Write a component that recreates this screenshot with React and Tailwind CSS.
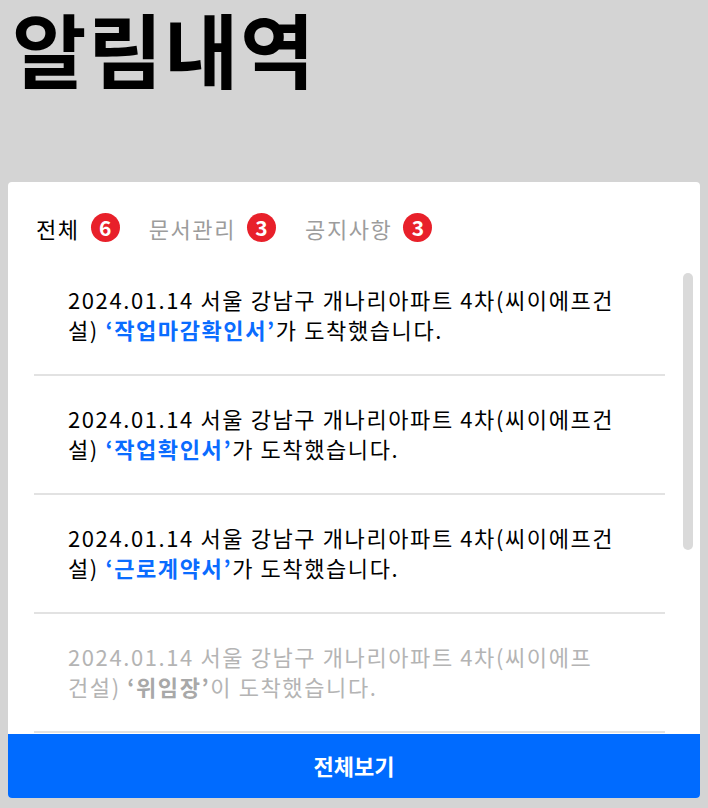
const font = { fontFamily: '"Noto Sans CJK KR", "Noto Sans", sans-serif' };

const tabs = [
  { label: '전체', count: 6, active: true },
  { label: '문서관리', count: 3 },
  { label: '공지사항', count: 3 },
];

const items = [
  { l1: '2024.01.14 서울 강남구 개나리아파트 4차(씨이에프건', pre: '설) ', doc: '작업마감확인서', post: '가 도착했습니다.' },
  { l1: '2024.01.14 서울 강남구 개나리아파트 4차(씨이에프건', pre: '설) ', doc: '작업확인서', post: '가 도착했습니다.' },
  { l1: '2024.01.14 서울 강남구 개나리아파트 4차(씨이에프건', pre: '설) ', doc: '근로계약서', post: '가 도착했습니다.' },
  { l1: '2024.01.14 서울 강남구 개나리아파트 4차(씨이에프', pre: '건설) ', doc: '위임장', post: '이 도착했습니다.', read: true },
];

function Badge({ n }) {
  return (
    <span className="flex h-[29px] w-[29px] items-center justify-center rounded-full bg-[#e8202a] text-[21px] font-bold leading-none text-white">
      {n}
    </span>
  );
}

export default function App() {
  return (
    <div className="flex min-h-[808px] flex-col bg-[#d4d4d4] px-2 pb-[10px]" style={font}>
      {/* Title */}
      <h1 className="h-[182px] pl-[4px] pt-[2px] text-[81px] font-bold leading-[1.1] tracking-[1.5px] text-black">알림내역</h1>

      {/* Card */}
      <div className="flex h-[616px] flex-col overflow-hidden rounded-[4px] bg-white">
        <div className="flex h-[75px] items-center gap-[29px] pl-[28px] pt-[16px]">
          {tabs.map((t) => (
            <div key={t.label} className="flex items-center gap-[11px]">
              <span className={`text-[22px] leading-none tracking-[1.6px] ${t.active ? 'text-black' : 'text-[#9c9c9c]'}`}>{t.label}</span>
              <Badge n={t.count} />
            </div>
          ))}
        </div>

        <div className="relative flex-1 overflow-hidden">
          <ul className="ml-[26px] mr-[35px]">
            {items.map((it, i) => (
              <li key={i} className="h-[119px] border-b-2 border-[#e2e2e2] pl-[34px] pt-[27px]">
                <p className={`whitespace-nowrap text-[22px] leading-[30px] tracking-[1.6px] ${it.read ? 'text-[#b4b4b4]' : 'text-black'}`}>
                  {it.l1}
                  <br />
                  {it.pre}
                  <b className={it.read ? 'text-[#a8a8a8]' : 'text-[#0a6cff]'}>‘{it.doc}’</b>
                  {it.post}
                </p>
              </li>
            ))}
          </ul>
          <div className="absolute right-[7px] top-[16px] h-[277px] w-[10px] rounded-full bg-[#dadada]" />
        </div>

        <button className="h-[64px] w-full shrink-0 bg-[#006bff] pb-[2px] text-[22px] font-bold text-white">전체보기</button>
      </div>
    </div>
  );
}
